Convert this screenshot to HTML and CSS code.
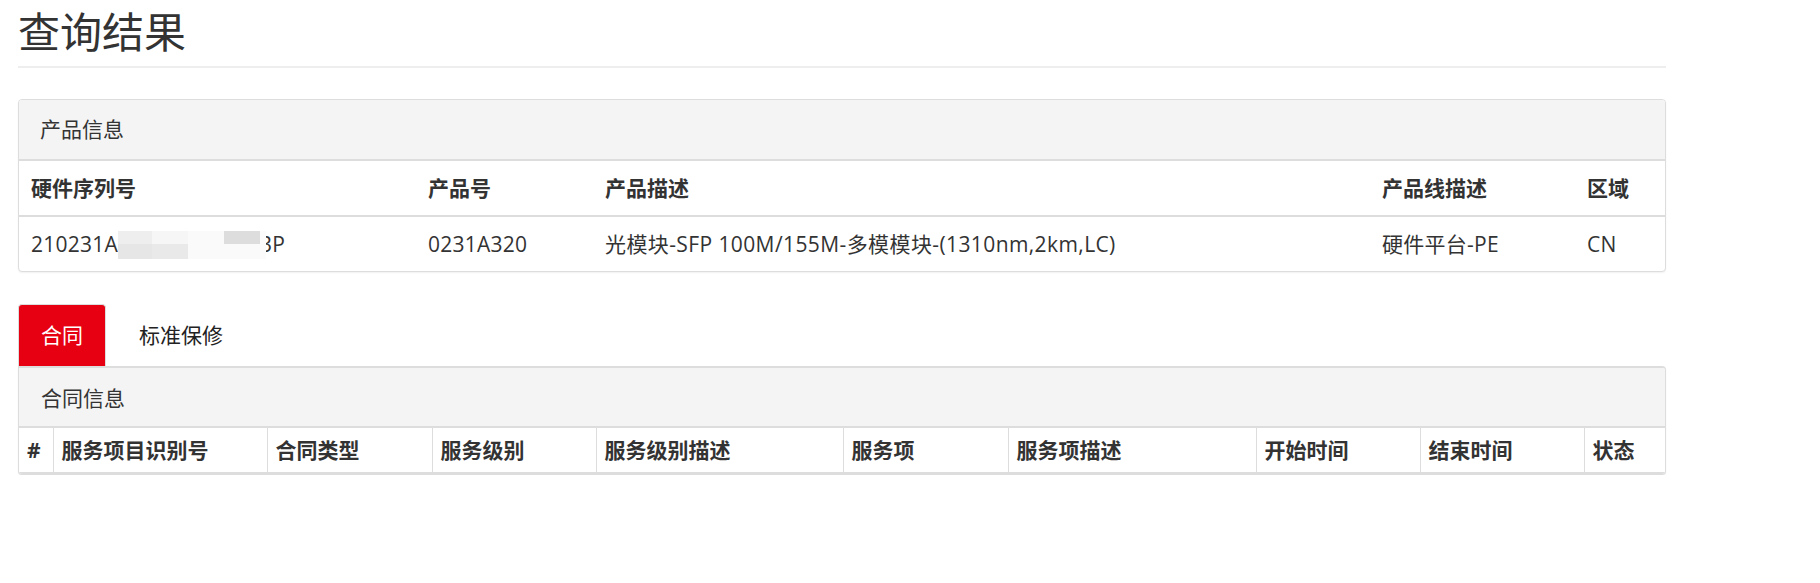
FILE: index.html
```html
<!DOCTYPE html>
<html lang="zh-CN">
<head>
<meta charset="utf-8">
<title>查询结果</title>
<link rel="stylesheet" href="styles.css">
</head>
<body>
<div class="page">
  <h1 class="page-title">查询结果</h1>

  <section class="panel product">
    <div class="panel-heading">产品信息</div>
    <table class="table t-product">
      <colgroup>
        <col class="c-sn"><col class="c-pn"><col class="c-desc"><col class="c-line"><col class="c-region">
      </colgroup>
      <thead>
        <tr><th>硬件序列号</th><th>产品号</th><th>产品描述</th><th>产品线描述</th><th>区域</th></tr>
      </thead>
      <tbody>
        <tr>
          <td><span class="serial">210231A<span class="redact"><i class="r a1"></i><i class="r b1"></i><i class="r c1"></i><i class="r d1"></i><i class="r e1"></i><i class="r a2"></i><i class="r b2"></i><i class="r c2"></i><i class="r d2"></i><i class="r e2"></i></span>3P</span></td>
          <td>0231A320</td>
          <td class="desc">光模块-SFP 100M/155M-多模模块-(1310nm,2km,LC)</td>
          <td>硬件平台-PE</td>
          <td>CN</td>
        </tr>
      </tbody>
    </table>
  </section>

  <nav class="tabs">
    <a class="tab active">合同</a>
    <a class="tab">标准保修</a>
  </nav>

  <section class="panel contract">
    <div class="panel-heading">合同信息</div>
    <table class="table t-contract">
      <colgroup>
        <col class="k1"><col class="k2"><col class="k3"><col class="k4"><col class="k5"><col class="k6"><col class="k7"><col class="k8"><col class="k9"><col class="k10">
      </colgroup>
      <thead>
        <tr><th>#</th><th>服务项目识别号</th><th>合同类型</th><th>服务级别</th><th>服务级别描述</th><th>服务项</th><th>服务项描述</th><th>开始时间</th><th>结束时间</th><th>状态</th></tr>
      </thead>
    </table>
  </section>
</div>
</body>
</html>
```

FILE: styles.css
```css
* { box-sizing: border-box; }

html, body {
  margin: 0;
  padding: 0;
  background: #fff;
}

body {
  font-family: "Open Sans", "Noto Sans CJK SC", sans-serif;
  font-size: 21px;
  color: #333;
}

.page {
  width: 1648px;
  margin-left: 18px;
}

.page-title {
  margin: 9px 0 0;
  padding-bottom: 11px;
  font-size: 42px;
  line-height: 46px;
  font-weight: 400;
  color: #333;
  border-bottom: 2px solid #eee;
}

.panel {
  border: 1px solid #ddd;
  border-radius: 4px;
  box-shadow: 0 1px 2px rgba(0, 0, 0, 0.06);
  background: #fff;
  overflow: hidden;
}

.panel.product {
  margin-top: 31px;
}

.panel-heading {
  background: #f4f4f4;
  border-bottom: 2px solid #ddd;
  line-height: 30px;
  height: 61px;
  padding: 14px 21px 0;
  color: #333;
}

.table {
  width: 100%;
  border-collapse: collapse;
  table-layout: fixed;
}

.table th {
  font-weight: 700;
  text-align: left;
  white-space: nowrap;
}

.t-product th,
.t-product td {
  padding: 12px 12px;
  line-height: 30px;
  text-align: left;
  vertical-align: middle;
}

.t-product thead th {
  border-bottom: 2px solid #ddd;
  height: 55px;
}

.t-product td {
  height: 55px;
  padding-top: 12px;
  padding-bottom: 12px;
  letter-spacing: 0.25px;
}

.t-product td.desc {
  letter-spacing: 0.4px;
}

.c-sn { width: 397px; }
.c-pn { width: 177px; }
.c-desc { width: 777px; }
.c-line { width: 205px; }
.c-region { width: 90px; }

.serial { white-space: nowrap; }

.redact {
  position: relative;
  z-index: 1;
  display: inline-block;
  width: 148px;
  height: 28px;
  margin-right: -6px;
  vertical-align: -7px;
}

.redact .r {
  position: absolute;
  display: block;
}
.redact .a1 { left: 0;    top: 0;  width: 34px; height: 13px; background: #eeeeee; }
.redact .a2 { left: 0;    top: 13px; width: 34px; height: 15px; background: #e6e6e6; }
.redact .b1 { left: 34px; top: 0;  width: 36px; height: 13px; background: #f6f6f6; }
.redact .b2 { left: 34px; top: 13px; width: 36px; height: 15px; background: #e9e9e9; }
.redact .c1 { left: 70px; top: 0;  width: 36px; height: 13px; background: #fafafa; }
.redact .c2 { left: 70px; top: 13px; width: 36px; height: 15px; background: #fafafa; }
.redact .d1 { left: 106px; top: 0; width: 36px; height: 13px; background: #dddddd; }
.redact .d2 { left: 106px; top: 13px; width: 36px; height: 15px; background: #fafafa; }
.redact .e1 { left: 142px; top: 0; width: 6px; height: 13px; background: #fbfbfb; }
.redact .e2 { left: 142px; top: 13px; width: 6px; height: 15px; background: #fbfbfb; }

.tabs {
  display: flex;
  align-items: flex-end;
  gap: 10px;
  margin-top: 32px;
  height: 62px;
}

.tab {
  display: block;
  height: 62px;
  padding: 15px 22px 0;
  line-height: 30px;
  color: #222;
  border: 1px solid transparent;
  border-bottom: 0;
  border-radius: 4px 4px 0 0;
  text-decoration: none;
  cursor: pointer;
}

.tab.active {
  background: #e60012;
  color: #fff;
  border-color: #ddd;
}

.panel.contract {
  border-top-width: 2px;
  border-top-left-radius: 0;
}

.panel.contract .panel-heading {
  height: 60px;
  padding: 15px 22px 0;
}

.t-contract th {
  padding: 6px 8px 7px;
  line-height: 30px;
  height: 45px;
  border-left: 1px solid #ddd;
  border-bottom: 2px solid #ddd;
}

.t-contract th:first-child {
  border-left: 0;
}

.k1 { width: 34px; }
.k2 { width: 214px; }
.k3 { width: 165px; }
.k4 { width: 164px; }
.k5 { width: 247px; }
.k6 { width: 165px; }
.k7 { width: 248px; }
.k8 { width: 164px; }
.k9 { width: 164px; }
.k10 { width: 81px; }
```
